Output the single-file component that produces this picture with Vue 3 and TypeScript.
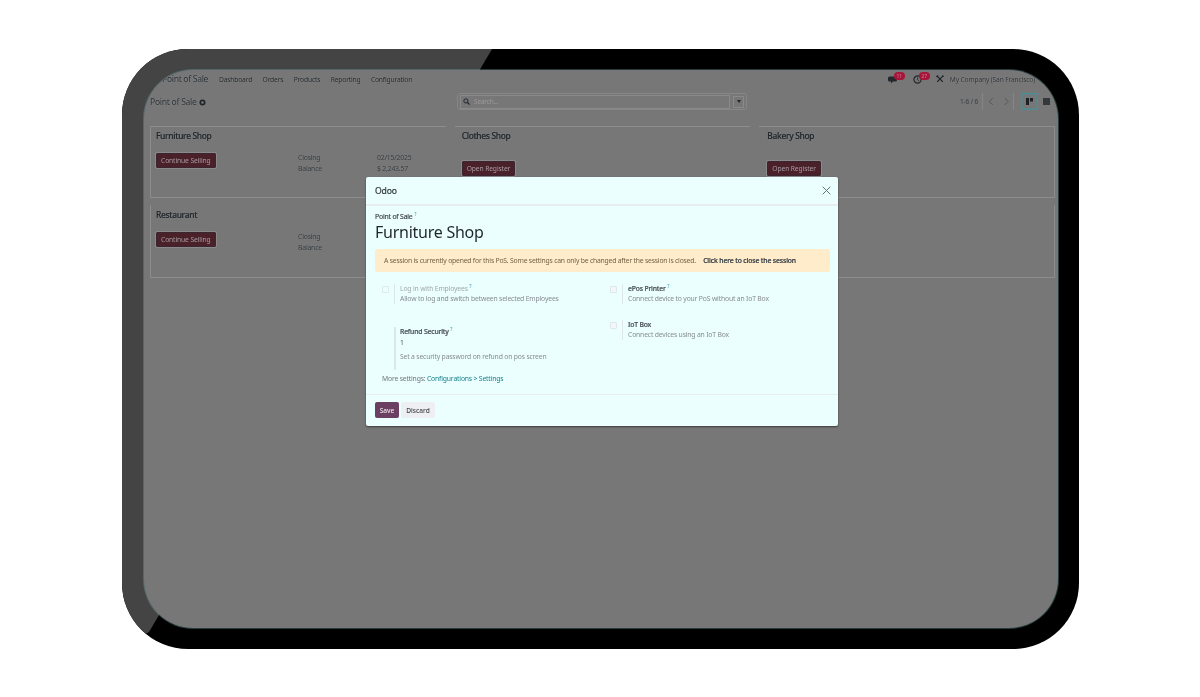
<script setup lang="ts">
interface Shop {
  name: string;
  action: string;
  closing?: string;
  balance?: string;
  showStats?: boolean;
}

const shops: Shop[] = [
  { name: "Furniture Shop", action: "Continue Selling", closing: "02/15/2025", balance: "$ 2,243.57", showStats: true },
  { name: "Clothes Shop", action: "Open Register" },
  { name: "Bakery Shop", action: "Open Register" },
  { name: "Restaurant", action: "Continue Selling", showStats: true },
  { name: "", action: "" },
  { name: "", action: "" },
];

const menu = ["Dashboard", "Orders", "Products", "Reporting", "Configuration"];
</script>

<template>
  <div class="page">
    <div class="device">
      <div class="sheen"></div>
      <div class="screen">
        <header class="navbar">
          <span class="brand">Point of Sale</span>
          <nav class="menu">
            <span v-for="item in menu" :key="item">{{ item }}</span>
          </nav>
          <div class="systray">
            <span class="tray-icon">
              <svg width="10" height="9" viewBox="0 0 10 9"><path d="M1.5 1.5h6a1.5 1.5 0 0 1 1.5 1.5v2a1.5 1.5 0 0 1-1.5 1.5H5L3 8.5v-2H1.5A1.5 1.5 0 0 1 0 5V3a1.5 1.5 0 0 1 1.5-1.5z" fill="#23282c"/></svg>
              <i class="badge">11</i>
            </span>
            <span class="tray-icon clock">
              <svg width="9" height="9" viewBox="0 0 9 9"><circle cx="4.5" cy="4.5" r="3.6" fill="none" stroke="#23282c" stroke-width="1.2"/><path d="M4.5 2.4v2.3l1.5 1" fill="none" stroke="#23282c" stroke-width=".9"/></svg>
              <i class="badge">27</i>
            </span>
            <svg class="tools" width="8" height="8" viewBox="0 0 8 8"><path d="M1.2 1.2l5.6 5.6M6.8 1.2L1.2 6.8" stroke="#1d2226" stroke-width="1.2"/><path d="M0 1.6L1.6 0l1 1-1.6 1.6zM6 .2a1.6 1.6 0 0 1 1.8 1.8L6.6 1.4z" fill="#1d2226"/></svg>
            <span class="company">My Company (San Francisco)</span>
          </div>
        </header>

        <div class="control">
          <div class="crumb">
            <span>Point of Sale</span>
            <svg width="7" height="7" viewBox="0 0 7 7"><circle cx="3.5" cy="3.5" r="2.2" fill="none" stroke="#20262b" stroke-width="1.7"/></svg>
          </div>
          <div class="search">
            <div class="search-input">
              <svg width="7" height="7" viewBox="0 0 7 7"><circle cx="2.9" cy="2.9" r="2.1" fill="none" stroke="#20262b" stroke-width="1"/><path d="M4.5 4.5L6.6 6.6" stroke="#20262b" stroke-width="1.2"/></svg>
              <span>Search...</span>
            </div>
            <div class="search-drop"><i></i></div>
          </div>
          <div class="pager">
            <span class="count">1-6 / 6</span>
            <span class="arrows">
              <svg width="15" height="17" viewBox="0 0 15 17"><path d="M9 5L5.5 8.5 9 12" fill="none" stroke="#555" stroke-width="1"/></svg>
              <svg width="15" height="17" viewBox="0 0 15 17"><path d="M6 5l3.5 3.5L6 12" fill="none" stroke="#555" stroke-width="1"/></svg>
            </span>
            <span class="view active"><svg width="7" height="7" viewBox="0 0 7 7"><path d="M0 0h3v7H0zM4 0h3v3.5H4z" fill="#1c2125"/></svg></span>
            <span class="view"><svg width="7" height="7" viewBox="0 0 7 7"><path d="M0 0h7v7H0z" fill="#33383c"/></svg></span>
          </div>
        </div>

        <section class="cards">
          <article v-for="(shop, i) in shops" :key="i" class="card">
            <h3>{{ shop.name }}</h3>
            <div v-if="shop.action" class="card-body" :class="{ low: !shop.showStats }">
              <button class="sell">{{ shop.action }}</button>
              <div v-if="shop.showStats" class="stat-labels"><span>Closing</span><span>Balance</span></div>
              <div v-if="shop.closing" class="stat-values"><span>{{ shop.closing }}</span><span>{{ shop.balance }}</span></div>
            </div>
          </article>
        </section>

        <div class="modal">
          <div class="modal-head">
            <span>Odoo</span>
            <svg width="9" height="9" viewBox="0 0 9 9"><path d="M.7.7l7.6 7.6M8.3.7L.7 8.3" stroke="#66727a" stroke-width="1"/></svg>
          </div>
          <div class="modal-body">
            <div class="overline">Point of Sale <sup>?</sup></div>
            <div class="shop-title">Furniture Shop</div>
            <div class="alert">
              <span>A session is currently opened for this PoS. Some settings can only be changed after the session is closed.</span>
              <b>Click here to close the session</b>
            </div>
            <div class="settings">
              <div class="col">
                <div class="setting muted">
                  <span class="check faint"></span>
                  <div class="setting-text">
                    <strong>Log in with Employees <sup>?</sup></strong>
                    <p>Allow to log and switch between selected Employees</p>
                  </div>
                </div>
                <div class="setting refund">
                  <span class="check hidden"></span>
                  <div class="setting-text">
                    <strong>Refund Security <sup>?</sup></strong>
                    <em>1</em>
                    <p>Set a security password on refund on pos screen</p>
                  </div>
                </div>
              </div>
              <div class="col right">
                <div class="setting">
                  <span class="check"></span>
                  <div class="setting-text">
                    <strong>ePos Printer <sup>?</sup></strong>
                    <p>Connect device to your PoS without an IoT Box</p>
                  </div>
                </div>
                <div class="setting">
                  <span class="check"></span>
                  <div class="setting-text">
                    <strong>IoT Box</strong>
                    <p>Connect devices using an IoT Box</p>
                  </div>
                </div>
              </div>
            </div>
            <div class="more">More settings: <a>Configurations &gt; Settings</a></div>
          </div>
          <div class="modal-foot">
            <button class="save">Save</button>
            <button class="discard">Discard</button>
          </div>
        </div>
      </div>
    </div>
  </div>
</template>

<style>
html,
body {
  margin: 0;
  background: #fff;
}
</style>

<style scoped>
.page {
  height: 697px;
  padding: 49px 0 0 122px;
  box-sizing: border-box;
  font-family: "Noto Sans", "Open Sans", sans-serif;
  overflow: hidden;
}

.device {
  position: relative;
  width: 957px;
  height: 600px;
  padding: 21px 21px 21px 22px;
  box-sizing: border-box;
  background: #000;
  border-radius: 66px;
  overflow: hidden;
}

.sheen {
  position: absolute;
  inset: 0;
  background: #444;
  clip-path: polygon(0 0, 370px 0, 27px 583px, 0 600px);
}

.screen {
  position: relative;
  height: 558px;
  background: #777;
  border-radius: 49px;
  box-shadow: 0 0 0 1px rgba(110, 170, 175, 0.35);
  overflow: hidden;
  color: #262b30;
  letter-spacing: -0.17px;
  filter: blur(0.3px);
}

.navbar {
  display: flex;
  align-items: center;
  height: 20px;
  padding: 0 23px 2px 18px;
  box-sizing: border-box;
  font-size: 7px;
  text-shadow: 0 0 1.5px rgba(190, 190, 190, 0.4);
}

.brand {
  font-size: 8.6px;
  letter-spacing: -0.32px;
  color: #2a3035;
  width: 57px;
  flex: none;
}

.menu {
  display: flex;
  gap: 10.5px;
  font-size: 6.7px;
  letter-spacing: -0.17px;
  color: #22282c;
}

.systray {
  margin-left: auto;
  display: flex;
  align-items: center;
}

.tray-icon {
  position: relative;
  display: inline-flex;
  width: 25px;
}

.clock {
  width: 23px;
}

.badge {
  position: absolute;
  top: -3px;
  left: 6px;
  width: 11px;
  height: 8px;
  border-radius: 5px;
  background: #a8153a;
  color: #c9808f;
  font: normal 5px/8px "Noto Sans", sans-serif;
  text-align: center;
  text-shadow: none;
}

.tools {
  margin-right: 6px;
}

.company {
  color: #30353a;
  font-size: 6.6px;
  letter-spacing: -0.12px;
  white-space: nowrap;
}

.control {
  display: grid;
  grid-template-columns: 307px 290px 1fr;
  align-items: center;
  height: 25px;
  padding-left: 6px;
  margin-top: -1px;
}

.crumb {
  display: flex;
  align-items: center;
  gap: 2.5px;
  padding-top: 1px;
  font-size: 8.6px;
  letter-spacing: -0.28px;
  color: #2b3236;
  text-shadow: 0 0 1.5px rgba(190, 190, 190, 0.4);
}

.search {
  display: flex;
  align-items: center;
  gap: 3px;
  height: 17px;
  padding: 0 2px;
  box-sizing: border-box;
  border: 1px solid #868686;
  border-radius: 3px;
}

.search-input {
  flex: 1;
  display: flex;
  align-items: center;
  gap: 4px;
  height: 12px;
  padding-left: 2px;
  border: 1px solid #8a8a8a;
  font-size: 6.5px;
  color: #9a9a9a;
}

.search-drop {
  width: 11px;
  height: 12px;
  border: 1px solid #8a8a8a;
  box-sizing: border-box;
  display: flex;
  align-items: center;
  justify-content: center;
}

.search-drop i {
  border: 2.2px solid transparent;
  border-top: 3px solid #20262b;
  border-bottom: 0;
}

.pager {
  display: flex;
  align-items: center;
  padding-left: 213px;
  font-size: 6.6px;
  color: #3a3f43;
  white-space: nowrap;
}

.count {
  width: 22px;
}

.arrows {
  display: flex;
  align-items: center;
  flex: none;
  width: 32px;
  margin-right: 7px;
  padding-left: 1px;
  box-sizing: border-box;
  border-left: 1px solid #868686;
  border-right: 1px solid #868686;
}

.view {
  display: inline-flex;
  flex: none;
  align-items: center;
  justify-content: center;
  width: 17px;
  height: 17px;
  box-sizing: border-box;
}

.view.active {
  box-shadow: inset 0 0 0 1.5px #4a8f97;
  border-radius: 2px;
}

.cards {
  display: grid;
  grid-template-columns: repeat(3, 1fr);
  column-gap: 9px;
  row-gap: 7px;
  margin: 12px 3px 0 6px;
}

.card {
  height: 72px;
  box-sizing: border-box;
  padding: 3px 8px 0 5px;
  border-top: 1px solid #8c8c8c;
  border-bottom: 1px solid #8c8c8c;
  border-left: 1px solid #8c8c8c;
}

.card:nth-child(3n + 2) {
  border-left: 0;
  padding-left: 7px;
}

.card:nth-child(3n) {
  border-left: 0;
  border-right: 1px solid #8c8c8c;
  padding-left: 8px;
}

.card:nth-child(n + 4) {
  border-top: 0;
  padding-top: 4px;
  height: 73px;
}

.card h3 {
  margin: 0;
  height: 11px;
  font-size: 8.4px;
  line-height: 11px;
  font-weight: 500;
  letter-spacing: -0.3px;
  color: #20262c;
  -webkit-text-stroke: 0.2px #20262c;
  text-shadow: 0 0 1.5px rgba(190, 190, 190, 0.4);
}

.card-body {
  display: grid;
  grid-template-columns: 142px 79px 1fr;
  align-items: start;
  margin-top: 12px;
}

.card-body.low {
  margin-top: 20px;
}

.sell {
  justify-self: start;
  height: 15px;
  padding: 0 4px;
  border: 1px solid #3a2530;
  outline: 1px solid #8a8a8a;
  border-radius: 1px;
  background: #4a2029;
  color: #a89ca2;
  font: 6.7px "Noto Sans", sans-serif;
  letter-spacing: -0.1px;
  white-space: nowrap;
}

.stat-labels,
.stat-values {
  display: flex;
  flex-direction: column;
  font-size: 6.8px;
  line-height: 10.5px;
  color: #33383c;
  text-shadow: 0 0 1.5px rgba(190, 190, 190, 0.35);
}

.modal {
  position: absolute;
  left: 222px;
  top: 107px;
  width: 472px;
  height: 249px;
  display: flex;
  flex-direction: column;
  background: #ebffff;
  border-radius: 2px;
  box-shadow: 0 1px 2px rgba(0, 0, 0, 0.5);
  color: #3a4248;
}

.modal-head {
  display: flex;
  align-items: center;
  justify-content: space-between;
  height: 27px;
  padding: 0 7px 0 9px;
  border-bottom: 2px solid #e8eef0;
  font-size: 8.6px;
  color: #333a40;
  -webkit-text-stroke: 0.2px #333a40;
}

.modal-body {
  flex: 1;
  padding: 6px 8px 0 9px;
}

.overline {
  font-size: 6.8px;
  line-height: 9px;
  color: #444b52;
  -webkit-text-stroke: 0.2px #444b52;
}

sup {
  color: #2a95a5;
  font-size: 5px;
  line-height: 0;
  font-weight: 400;
  -webkit-text-stroke: 0;
}

.shop-title {
  font-size: 16px;
  letter-spacing: -0.25px;
  line-height: 22px;
  color: #1f262c;
}

.alert {
  display: flex;
  justify-content: space-between;
  align-items: center;
  height: 23px;
  margin-top: 6px;
  padding: 0 34px 0 9px;
  background: #ffeccb;
  border-radius: 2px;
  font-size: 6.8px;
  letter-spacing: -0.2px;
  color: #725f42;
  white-space: nowrap;
}

.alert b {
  color: #343b42;
  font-weight: 500;
  letter-spacing: -0.13px;
  -webkit-text-stroke: 0.2px #343b42;
}

.settings {
  display: grid;
  grid-template-columns: 228px 1fr;
  margin-top: 12px;
  padding-left: 7px;
}

.setting {
  display: flex;
  align-items: flex-start;
  font-size: 6.8px;
}

.col .setting + .setting {
  margin-top: 23px;
}

.right .setting + .setting {
  margin-top: 16px;
}

.check {
  flex: none;
  width: 7px;
  height: 7px;
  margin-top: 2px;
  margin-right: 5px;
  box-sizing: border-box;
  border: 1px solid #dfe7ea;
  background: #f3f7f8;
  border-radius: 1px;
}

.check.faint {
  background: none;
  border-color: #e0eaec;
}

.check.hidden {
  visibility: hidden;
}

.setting-text {
  border-left: 1px solid #dde6e8;
  padding-left: 5px;
}

.refund .setting-text {
  padding-left: 4px;
  border-left-width: 2px;
}

.setting-text strong {
  display: block;
  font-weight: 500;
  line-height: 10px;
  color: #4a5158;
  -webkit-text-stroke: 0.2px #4a5158;
}

.setting-text p {
  margin: 0;
  line-height: 10px;
  color: #878c92;
}

.setting-text em {
  display: block;
  font-style: normal;
  line-height: 12px;
  color: #555;
}

.refund p {
  margin-top: 3px;
  padding-bottom: 8px;
}

.muted .setting-text strong {
  color: #a2a7ab;
  font-weight: 400;
  -webkit-text-stroke: 0;
}

.more {
  margin-top: 4px;
  padding-left: 7px;
  font-size: 6.8px;
  line-height: 10px;
  color: #70767c;
}

.more a {
  color: #157f8c;
}

.modal-foot {
  display: flex;
  gap: 2px;
  height: 32px;
  padding: 7px 8px 0 9px;
  box-sizing: border-box;
  border-top: 1px solid #e6eef0;
}

.modal-foot button {
  height: 16px;
  padding: 0;
  border: 0;
  border-radius: 2px;
  font: 500 6.6px "Noto Sans", sans-serif;
}

.save {
  width: 24px;
  background: #6a3f62;
  color: #efe6ee;
}

.discard {
  width: 34px;
  background: #eeeff2;
  color: #3f464d;
}
</style>
